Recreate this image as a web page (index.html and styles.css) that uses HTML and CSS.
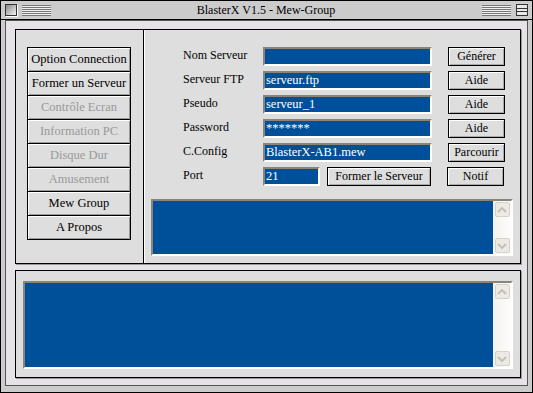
FILE: index.html
```html
<!DOCTYPE html>
<html lang="fr">
<head>
    <meta charset="UTF-8">
    <meta name="viewport" content="width=device-width, initial-scale=1.0">
    <title>BlasterX V1.5 - Mew-Group</title>
    <link rel="stylesheet" href="styles.css">
</head>
<body>
    <div class="window">
        <div class="titlebar">
            <span class="closebox"></span>
            <span class="stripes"></span>
            <span class="title">BlasterX V1.5 - Mew-Group</span>
            <span class="stripes"></span>
            <span class="zoombox">
                <svg width="12" height="12" viewBox="0 0 12 12">
                    <rect x="0.5" y="0.5" width="11" height="11" fill="#e8e8e8" stroke="#333"/>
                    <line x1="1" y1="4.5" x2="11" y2="4.5" stroke="#333"/>
                    <line x1="1" y1="7.5" x2="11" y2="7.5" stroke="#333"/>
                </svg>
            </span>
        </div>
        <div class="frame">
            <div class="content">
                <div class="panel top-panel">
                    <div class="menu">
                        <div class="menu-btn">Option Connection</div>
                        <div class="menu-btn">Former un Serveur</div>
                        <div class="menu-btn disabled">Contrôle Ecran</div>
                        <div class="menu-btn disabled">Information PC</div>
                        <div class="menu-btn disabled">Disque Dur</div>
                        <div class="menu-btn disabled">Amusement</div>
                        <div class="menu-btn">Mew Group</div>
                        <div class="menu-btn">A Propos</div>
                    </div>
                    <div class="form-area">
                        <div class="form">
                            <div class="row">
                                <span class="label">Nom Serveur</span>
                                <div class="field"></div>
                                <div class="btn">Générer</div>
                            </div>
                            <div class="row">
                                <span class="label">Serveur FTP</span>
                                <div class="field">serveur.ftp</div>
                                <div class="btn">Aide</div>
                            </div>
                            <div class="row">
                                <span class="label">Pseudo</span>
                                <div class="field">serveur_1</div>
                                <div class="btn">Aide</div>
                            </div>
                            <div class="row">
                                <span class="label">Password</span>
                                <div class="field">*******</div>
                                <div class="btn">Aide</div>
                            </div>
                            <div class="row">
                                <span class="label">C.Config</span>
                                <div class="field">BlasterX-AB1.mew</div>
                                <div class="btn">Parcourir</div>
                            </div>
                            <div class="row">
                                <span class="label">Port</span>
                                <div class="field port">21</div>
                                <div class="btn wide">Former le Serveur</div>
                                <div class="btn">Notif</div>
                            </div>
                        </div>
                        <div class="textbox small">
                            <div class="text"></div>
                            <div class="scrollbar">
                                <div class="arrow">
                                    <svg width="10" height="6" viewBox="0 0 10 6"><polyline points="1,5 5,1 9,5" fill="none" stroke="#c4c0b8" stroke-width="2"/></svg>
                                </div>
                                <div class="track"></div>
                                <div class="arrow">
                                    <svg width="10" height="6" viewBox="0 0 10 6"><polyline points="1,1 5,5 9,1" fill="none" stroke="#c4c0b8" stroke-width="2"/></svg>
                                </div>
                            </div>
                        </div>
                    </div>
                </div>
                <div class="panel bottom-panel">
                    <div class="textbox big">
                        <div class="text"></div>
                        <div class="scrollbar">
                            <div class="arrow">
                                <svg width="10" height="6" viewBox="0 0 10 6"><polyline points="1,5 5,1 9,5" fill="none" stroke="#c4c0b8" stroke-width="2"/></svg>
                            </div>
                            <div class="track"></div>
                            <div class="arrow">
                                <svg width="10" height="6" viewBox="0 0 10 6"><polyline points="1,1 5,5 9,1" fill="none" stroke="#c4c0b8" stroke-width="2"/></svg>
                            </div>
                        </div>
                    </div>
                </div>
            </div>
        </div>
    </div>
</body>
</html>
```

FILE: styles.css
```css
body {
    margin: 0;
    font-family: "Liberation Serif", "Times New Roman", serif;
    font-size: 12px;
    color: #000;
    background: #fff;
}
.window {
    width: 533px;
    height: 393px;
    box-sizing: border-box;
    border: 1px solid #000;
    background: #cccccc;
    display: flex;
    flex-direction: column;
}
.titlebar {
    height: 18px;
    border-bottom: 1px solid #000;
    display: flex;
    align-items: center;
    padding: 0 4px;
}
.closebox {
    width: 10px;
    height: 10px;
    border: 1px solid #333;
    background: linear-gradient(135deg, #888 0%, #f4f4f4 100%);
    box-shadow: 1px 1px 0 #fff;
}
.stripes {
    width: 29px;
    height: 11px;
    margin: 0 4px 0 5px;
    background: repeating-linear-gradient(to bottom, #777 0, #777 1px, #f0f0f0 1px, #f0f0f0 2px);
}
.title {
    flex: 1;
    text-align: center;
    font-size: 12px;
}
.zoombox {
    display: flex;
    margin-left: 1px;
}
.frame {
    flex: 1;
    display: flex;
    padding: 0 4px 6px 4px;
}
.content {
    flex: 1;
    border: 1px solid #555;
    background: #e6e3e6;
    padding: 8px 6px 7px 9px;
    display: flex;
    flex-direction: column;
    gap: 6px;
}
.panel {
    border: 1px solid #000;
    background: #dedede;
    box-shadow: 1px 1px 0 #999;
}
.top-panel {
    height: 233px;
    display: flex;
}
.bottom-panel {
    padding: 10px 7px 8px 7px;
    height: 88px;
}
.menu {
    width: 116px;
    padding: 17px 0 0 11px;
    border-right: 1px solid #000;
    box-shadow: 1px 0 0 #fff;
}
.menu-btn {
    width: 102px;
    height: 23px;
    border: 1px solid #000;
    margin-top: -1px;
    box-shadow: inset 1px 1px 0 #fff, inset -1px -1px 0 #999;
    display: flex;
    align-items: center;
    justify-content: center;
    font-family: "Liberation Serif", "Times New Roman", serif;
    font-size: 12.5px;
}
.menu-btn:first-child {
    margin-top: 0;
}
.menu-btn.disabled {
    color: #999;
}
.form-area {
    flex: 1;
    padding: 17px 7px 0 7px;
}
.form {
    padding-left: 32px;
    display: flex;
    flex-direction: column;
    gap: 5px;
}
.row {
    display: flex;
    align-items: center;
    height: 19px;
}
.label {
    width: 80px;
    margin-top: -3px;
}
.field {
    width: 164px;
    height: 15px;
    border: 2px solid;
    border-color: #8a857a #fff #fff #8a857a;
    background: #004f99;
    color: #fff;
    padding: 0 0 0 1px;
    line-height: 15px;
    margin-right: 16px;
    font-size: 12.5px;
}
.field.port {
    width: 52px;
    margin-right: 7px;
}
.btn {
    width: 55px;
    height: 17px;
    border: 1px solid #000;
    box-shadow: inset 1px 1px 0 #fff, inset -1px -1px 0 #aaa;
    display: flex;
    align-items: center;
    justify-content: center;
    font-family: "Liberation Serif", "Times New Roman", serif;
}
.btn.wide {
    width: 102px;
    margin-right: 16px;
}
.textbox {
    display: flex;
    border: 2px solid;
    border-color: #8a857a #fff #fff #8a857a;
}
.textbox.small {
    margin-top: 13px;
    height: 53px;
}
.textbox.big {
    height: 84px;
}
.textbox .text {
    flex: 1;
    background: #004f99;
}
.scrollbar {
    width: 18px;
    background: linear-gradient(to right, #f4f2ee, #fdfdfb);
    display: flex;
    flex-direction: column;
    align-items: center;
    padding: 1px 0;
}
.track {
    flex: 1;
}
.arrow {
    width: 13px;
    height: 13px;
    border: 1px solid #d6d2ca;
    border-radius: 2px;
    background: #edeae4;
    display: flex;
    align-items: center;
    justify-content: center;
}
```
